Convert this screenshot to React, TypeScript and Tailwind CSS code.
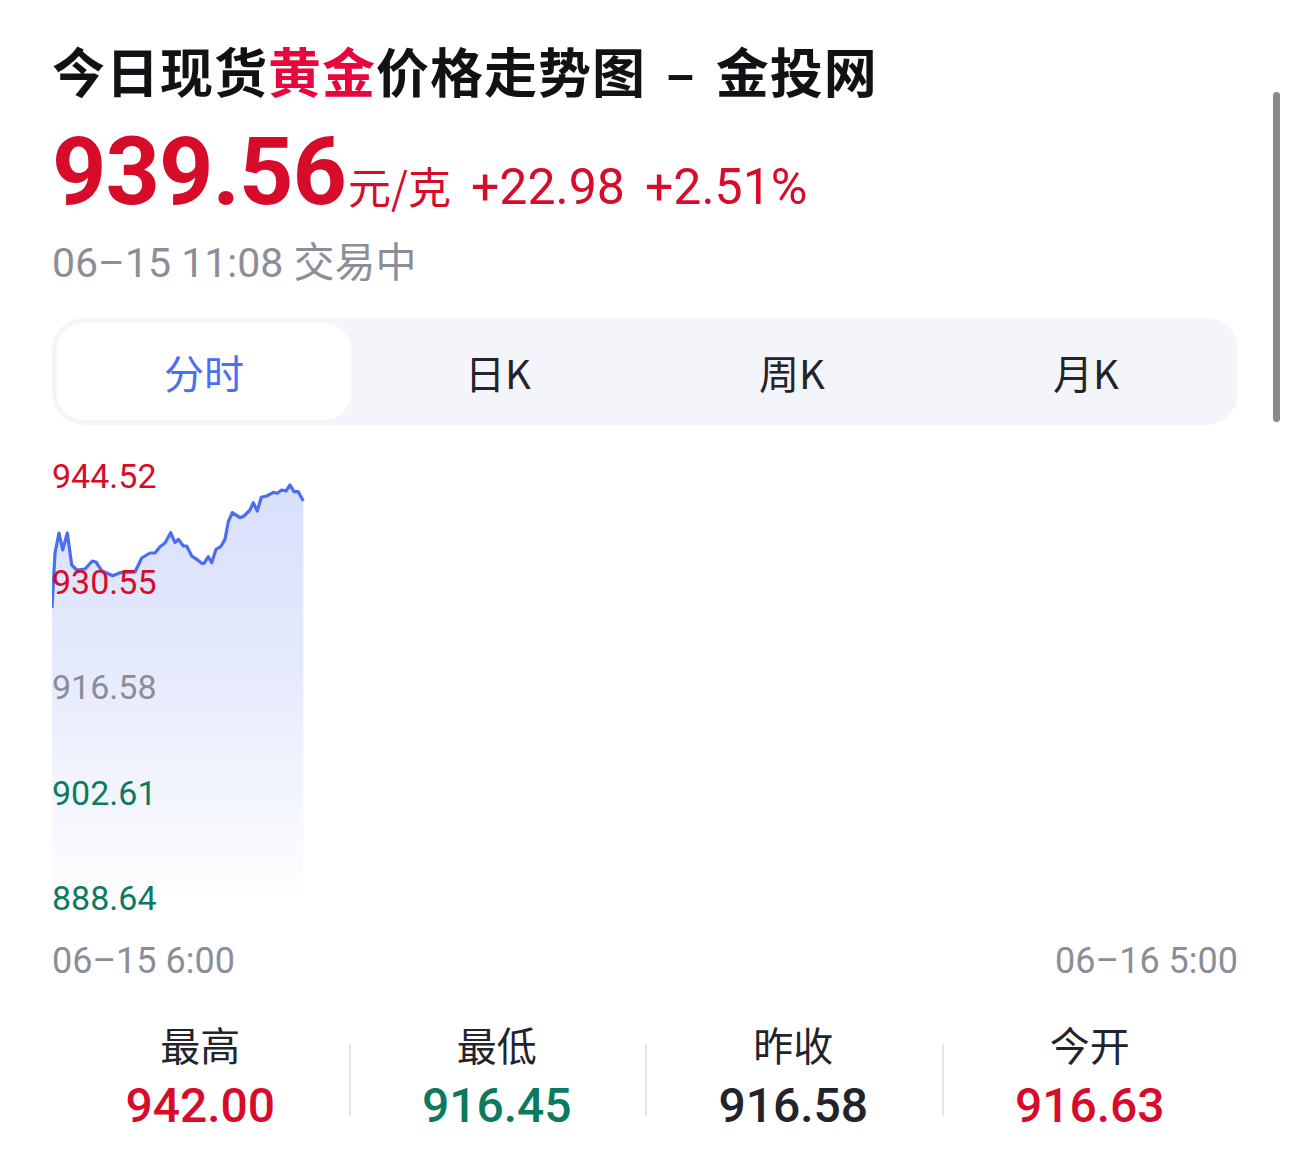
import React from 'react';

const pts: [number, number][] = [
  [0, 153], [3, 98], [7, 78], [10.7, 95], [15.3, 78], [19.7, 110], [24.7, 115], [33, 114],
  [40.3, 106], [44, 107], [49.7, 115.7], [60.7, 120.7], [68, 117.7], [83, 117], [89.7, 103],
  [98, 98], [103, 98], [108, 91.7], [113, 88], [118.7, 77.7], [123, 87.7], [126.3, 84.3],
  [131.3, 91], [134.7, 91], [139.7, 101], [144.7, 104.3], [149.7, 108.3], [152, 108.3],
  [156.3, 101.7], [159.7, 107.7], [164, 94.3], [168.7, 91.7], [173, 84.3], [176.3, 66.7],
  [180.3, 57.7], [188, 62.7], [192, 61], [198, 55], [201.3, 47.7], [205.3, 56], [209.3, 42.3],
  [214.7, 41], [221.3, 37.3], [225.3, 38.3], [229.7, 35], [234, 36], [238, 30], [242, 36.7],
  [246.3, 36.7], [251.3, 46],
];

const line = pts.map(([x, y]) => `${x},${y}`).join(' ');
const area = `0,450 ${line} 251.3,450`;

const axis = [
  { v: '944.52', c: 'text-[#d70c2b]' },
  { v: '930.55', c: 'text-[#d70c2b]' },
  { v: '916.58', c: 'text-[#8b8d99]' },
  { v: '902.61', c: 'text-[#0b7a5e]' },
  { v: '888.64', c: 'text-[#0b7a5e]' },
];

const tabs = ['分时', '日K', '周K', '月K'];

const stats = [
  { label: '最高', value: '942.00', c: 'text-[#d70c2b]' },
  { label: '最低', value: '916.45', c: 'text-[#0b7a5e]' },
  { label: '昨收', value: '916.58', c: 'text-[#23242b]' },
  { label: '今开', value: '916.63', c: 'text-[#d70c2b]' },
];

function PriceChart() {
  return (
    <div className="relative h-[464px] mt-[30px]">
      <svg className="absolute inset-0" width="1186" height="464" viewBox="0 0 1186 464">
        <defs>
          <linearGradient id="fillg" x1="0" y1="0" x2="0" y2="1">
            <stop offset="0%" stopColor="#d9e0fb" />
            <stop offset="45%" stopColor="#e6eafc" />
            <stop offset="100%" stopColor="#ffffff" />
          </linearGradient>
        </defs>
        <polygon points={area} fill="url(#fillg)" />
        <polyline points={line} fill="none" stroke="#4b6ef0" strokeWidth="3.2" strokeLinejoin="round" />
      </svg>
      <div className="relative flex flex-col justify-between h-full">
        {axis.map((a) => (
          <div key={a.v} className={`h-[42px] leading-[42px] text-[34px] ${a.c}`}>{a.v}</div>
        ))}
      </div>
    </div>
  );
}

export default function App() {
  return (
    <div className="relative w-[1290px] h-[1160px] bg-white overflow-hidden font-['Roboto','Noto_Sans_CJK_SC',sans-serif]">
      <div className="absolute right-[10px] top-[92px] w-[7px] h-[330px] rounded-full bg-[#8a8a8a]" />
      <div className="px-[52px] w-[1290px]">
        <h1 className="pt-[36px] h-[104px] leading-[68px] text-[53px] font-bold text-[#111116] font-['Noto_Sans_CJK_SC',sans-serif] tracking-[1px] whitespace-nowrap flex">
          <span>
            今日现货<span className="text-[#e8073d]">黄金</span>价格走势图
          </span>
          <span className="mx-[20px]">–</span>
          <span>金投网</span>
        </h1>
        <div className="mt-[14px] flex items-baseline h-[108px] leading-[108px] text-[#d70c2b] whitespace-nowrap">
          <span className="text-[95px] font-bold tracking-[-1px]">939.56</span>
          <span className="text-[43px] font-['Noto_Sans_CJK_SC',sans-serif] ml-[2px]">元/克</span>
          <span className="text-[50px] ml-[20px]">+22.98</span>
          <span className="text-[50px] ml-[20px]">+2.51%</span>
        </div>
        <div className="mt-[5px] h-[56px] leading-[56px] text-[41px] text-[#8b8d99] whitespace-nowrap">
          06–15 11:08 <span className="font-['Noto_Sans_CJK_SC',sans-serif]">交易中</span>
        </div>
        <div className="mt-[31px] h-[107px] rounded-[32px] bg-[#f4f5fa] p-[5px] flex">
          {tabs.map((t, i) => (
            <div
              key={t}
              className={`flex-1 flex items-center justify-center rounded-[27px] text-[40px] font-['Noto_Sans_CJK_SC',sans-serif] ${
                i === 0 ? 'bg-white text-[#4b6ef5]' : 'text-[#23242b]'
              }`}
            >
              {t}
            </div>
          ))}
        </div>
        <PriceChart />
        <div className="flex justify-between h-[56px] leading-[56px] mt-[14px] text-[36px] text-[#8b8d99]">
          <span>06–15 6:00</span>
          <span>06–16 5:00</span>
        </div>
        <div className="flex mt-[25px]">
          {stats.map((s, i) => (
            <div key={s.label} className="flex-1 relative flex flex-col items-center">
              {i > 0 && <div className="absolute left-0 top-[30px] w-[2px] h-[72px] bg-[#e6e6e9]" />}
              <div className="h-[60px] leading-[60px] text-[40px] text-[#23242b] font-['Noto_Sans_CJK_SC',sans-serif]">{s.label}</div>
              <div className={`h-[64px] leading-[64px] text-[48px] font-medium ${s.c}`}>{s.value}</div>
            </div>
          ))}
        </div>
      </div>
    </div>
  );
}
